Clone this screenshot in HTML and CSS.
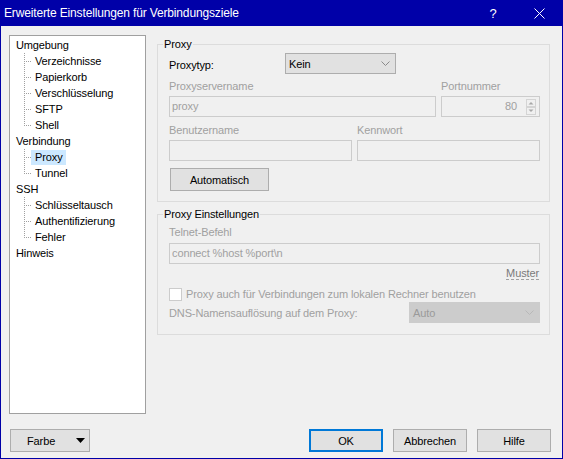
FILE: index.html
```html
<!DOCTYPE html>
<html lang="de">
<head>
<meta charset="UTF-8">
<title>Erweiterte Einstellungen für Verbindungsziele</title>
<link rel="stylesheet" href="styles.css">
</head>
<body>

<div class="window">
	<div class="titlebar">
		<span class="title">Erweiterte Einstellungen für Verbindungsziele</span>
		<span class="cap-btn help">?</span>
		<span class="cap-btn close">
			<svg width="11" height="11" viewBox="0 0 11 11"><path d="M0.5 0.5L10.5 10.5M10.5 0.5L0.5 10.5" stroke="#fff" stroke-width="1" fill="none"/></svg>
		</span>
	</div>

	<div class="body">
		<div class="main">
			<ul class="tree">
				<li class="node"><span class="txt">Umgebung</span></li>
				<li class="node child"><span class="conn"></span><span class="txt">Verzeichnisse</span></li>
				<li class="node child"><span class="conn"></span><span class="txt">Papierkorb</span></li>
				<li class="node child"><span class="conn"></span><span class="txt">Verschlüsselung</span></li>
				<li class="node child"><span class="conn"></span><span class="txt">SFTP</span></li>
				<li class="node child last"><span class="conn"></span><span class="txt">Shell</span></li>
				<li class="node"><span class="txt">Verbindung</span></li>
				<li class="node child sel"><span class="conn"></span><span class="txt">Proxy</span></li>
				<li class="node child last"><span class="conn"></span><span class="txt">Tunnel</span></li>
				<li class="node"><span class="txt">SSH</span></li>
				<li class="node child"><span class="conn"></span><span class="txt">Schlüsseltausch</span></li>
				<li class="node child"><span class="conn"></span><span class="txt">Authentifizierung</span></li>
				<li class="node child last"><span class="conn"></span><span class="txt">Fehler</span></li>
				<li class="node"><span class="txt">Hinweis</span></li>
			</ul>

			<div class="pane">
				<fieldset class="group">
					<legend>Proxy</legend>
					<div class="gbody">
						<div class="type-row">
							<span class="type-label">Proxytyp:</span>
							<div class="combo">
								<span>Kein</span>
								<svg class="chev" width="9" height="5" viewBox="0 0 9 5"><path d="M0.5 0.5L4.5 4.5L8.5 0.5" stroke="#8a8a8a" fill="none"/></svg>
							</div>
						</div>

						<div class="lbl-row">
							<span class="lbl-host">Proxyservername</span>
							<span>Portnummer</span>
						</div>
						<div class="in-row">
							<div class="field host">proxy</div>
							<div class="field port">
								<span>80</span>
								<svg class="spin" width="10" height="16" viewBox="0 0 10 16">
									<rect x="0.5" y="0.5" width="9" height="7" fill="none" stroke="#d4d4d4"/>
									<rect x="0.5" y="8.5" width="9" height="7" fill="none" stroke="#d4d4d4"/>
									<path d="M2.5 5.5L5 3L7.5 5.5Z" fill="#a8a8a8"/>
									<path d="M2.5 10.5L5 13L7.5 10.5Z" fill="#a8a8a8"/>
								</svg>
							</div>
						</div>

						<div class="lbl-row">
							<span class="lbl-user">Benutzername</span>
							<span>Kennwort</span>
						</div>
						<div class="in-row">
							<div class="field half"></div>
							<div class="field half"></div>
						</div>

						<div class="btn auto">Automatisch</div>
					</div>
				</fieldset>

				<fieldset class="group second">
					<legend>Proxy Einstellungen</legend>
					<div class="gbody">
						<div class="lbl-row first">
							<span>Telnet-Befehl</span>
						</div>
						<div class="field wide">connect %host %port\n</div>
						<div class="muster-row"><span class="muster">Muster</span></div>
						<div class="chk-row">
							<span class="box"></span>
							<span>Proxy auch für Verbindungen zum lokalen Rechner benutzen</span>
						</div>
						<div class="dns-row">
							<span>DNS-Namensauflösung auf dem Proxy:</span>
							<div class="combo dis">
								<span>Auto</span>
								<svg class="chev" width="9" height="5" viewBox="0 0 9 5"><path d="M0.5 0.5L4.5 4.5L8.5 0.5" stroke="#b8b8b8" fill="none"/></svg>
							</div>
						</div>
					</div>
				</fieldset>
			</div>
		</div>

		<div class="footer">
			<div class="btn farbe">
				<span>Farbe</span>
				<svg class="drop" width="9" height="5" viewBox="0 0 9 5"><path d="M0 0H9L4.5 5Z" fill="#000"/></svg>
			</div>
			<div class="actions">
				<div class="btn action default">OK</div>
				<div class="btn action">Abbrechen</div>
				<div class="btn action">Hilfe</div>
			</div>
		</div>
	</div>
</div>

</body>
</html>
```

FILE: styles.css
```css
* {
	box-sizing: border-box;
	margin: 0;
	padding: 0;
}
html, body {
	background: #f0f0f0;
	color: #000;
}
body {
	font-family: "Liberation Sans", Arial, sans-serif;
	font-size: 11px;
	letter-spacing: -0.12px;
	width: 563px;
	height: 459px;
	overflow: hidden;
}

.window {
	width: 563px;
	height: 459px;
	border: 1px solid #0000a8;
	border-top: 0;
	display: flex;
	flex-direction: column;
}

/* title bar */
.titlebar {
	height: 26px;
	flex: none;
	background: #0000a8;
	color: #fff;
	display: flex;
	align-items: center;
	padding-left: 3px;
}
.title {
	flex: 1;
	font-size: 12px;
	letter-spacing: -0.15px;
}
.cap-btn {
	width: 46px;
	height: 26px;
	display: flex;
	align-items: center;
	justify-content: center;
}
.help {
	font-size: 13px;
}

.body {
	flex: 1;
	padding: 9px 11px 6px 8px;
	display: flex;
	flex-direction: column;
}
.main {
	display: flex;
	gap: 11px;
	height: 379px;
}

/* tree */
.tree {
	width: 137px;
	height: 379px;
	flex: none;
	background: #fff;
	border: 1px solid #a0a0a0;
	padding: 1px 0 0 3px;
	list-style: none;
}
.node {
	display: flex;
	align-items: flex-end;
	height: 16px;
	line-height: 15px;
}
.node .txt {
	height: 15px;
	padding: 0 3px;
	white-space: nowrap;
}
.child .txt {
	padding: 0 3px 0 4px;
}
.conn {
	flex: none;
	align-self: stretch;
	width: 7px;
	margin-left: 11px;
	background:
		repeating-linear-gradient(180deg, #a0a0a0 0 1px, transparent 1px 2px) 0 0 / 1px 100% no-repeat,
		repeating-linear-gradient(90deg, #a0a0a0 0 1px, transparent 1px 2px) 0 8px / 100% 1px no-repeat;
}
.last .conn {
	background:
		repeating-linear-gradient(180deg, #a0a0a0 0 1px, transparent 1px 2px) 0 0 / 1px 9px no-repeat,
		repeating-linear-gradient(90deg, #a0a0a0 0 1px, transparent 1px 2px) 0 8px / 100% 1px no-repeat;
}
.sel .txt {
	background: #cce8ff;
}

/* right side */
.pane {
	flex: 1;
	padding-top: 2px;
}
.group {
	width: 393px;
	border: 1px solid #dcdcdc;
	padding: 1px 9px 10px 5px;
	min-inline-size: 0;
}
.group legend {
	padding: 0 1px;
	line-height: 15px;
}
.group.second {
	margin-top: 5px;
	padding-bottom: 11px;
	padding-top: 0;
}
.gbody {
	margin-left: 6px;
}

.type-row {
	display: flex;
	align-items: center;
	height: 21px;
}
.type-label {
	width: 116px;
	padding-top: 3px;
}

.combo {
	width: 111px;
	height: 21px;
	background: #e1e1e1;
	border: 1px solid #adadad;
	display: flex;
	align-items: center;
	justify-content: space-between;
	padding: 0 5px 0 3px;
}
.combo.dis {
	width: 131px;
	background: #cccccc;
	border-color: #cccccc;
	color: #9a9a9a;
}

.lbl-row {
	display: flex;
	margin-top: 5px;
	line-height: 15px;
	color: #a0a0a0;
}
.lbl-row + .lbl-row, .in-row + .lbl-row {
	margin-top: 6px;
}
.lbl-row.first {
	margin-top: 3px;
}
.lbl-host {
	width: 272px;
}
.lbl-user {
	width: 188px;
}

.in-row {
	display: flex;
	gap: 5px;
	margin-top: 2px;
}
.field {
	height: 21px;
	border: 1px solid #cccccc;
	color: #a0a0a0;
	padding-left: 2px;
	line-height: 19px;
	white-space: nowrap;
}
.host {
	width: 267px;
}
.port {
	width: 99px;
	display: flex;
	align-items: center;
	justify-content: flex-end;
	padding-right: 3px;
}
.spin {
	margin-left: 9px;
	display: block;
}
.half {
	width: 183px;
}
.wide {
	width: 371px;
	margin-top: 3px;
}

.btn {
	height: 23px;
	background: #e1e1e1;
	border: 1px solid #adadad;
	display: flex;
	align-items: center;
	justify-content: center;
	white-space: nowrap;
}
.btn.auto {
	width: 99px;
	margin: 7px 0 0 1px;
}

.muster-row {
	margin-top: 2px;
	height: 15px;
	line-height: 15px;
	text-align: right;
	color: #7a7a7a;
	padding-right: 1px;
}
.muster {
	text-decoration: underline dashed #a0a0a0;
	text-underline-offset: 2px;
}

.chk-row {
	display: flex;
	align-items: center;
	height: 16px;
	margin-top: 5px;
	color: #a0a0a0;
	white-space: nowrap;
}
.box {
	width: 13px;
	height: 13px;
	background: #fff;
	border: 1px solid #cccccc;
	margin-right: 4px;
	flex: none;
}

.dns-row {
	display: flex;
	align-items: center;
	justify-content: space-between;
	height: 21px;
	color: #a0a0a0;
}

/* footer */
.footer {
	display: flex;
	margin-top: 15px;
	height: 23px;
}
.btn.farbe {
	width: 80px;
	margin-left: 1px;
	justify-content: flex-start;
	padding: 0 4px 0 16px;
}
.drop {
	margin-left: auto;
}
.actions {
	margin-left: auto;
	display: flex;
	gap: 10px;
}
.btn.action {
	width: 74px;
}
.btn.default {
	border: 2px solid #0078d7;
}
```
